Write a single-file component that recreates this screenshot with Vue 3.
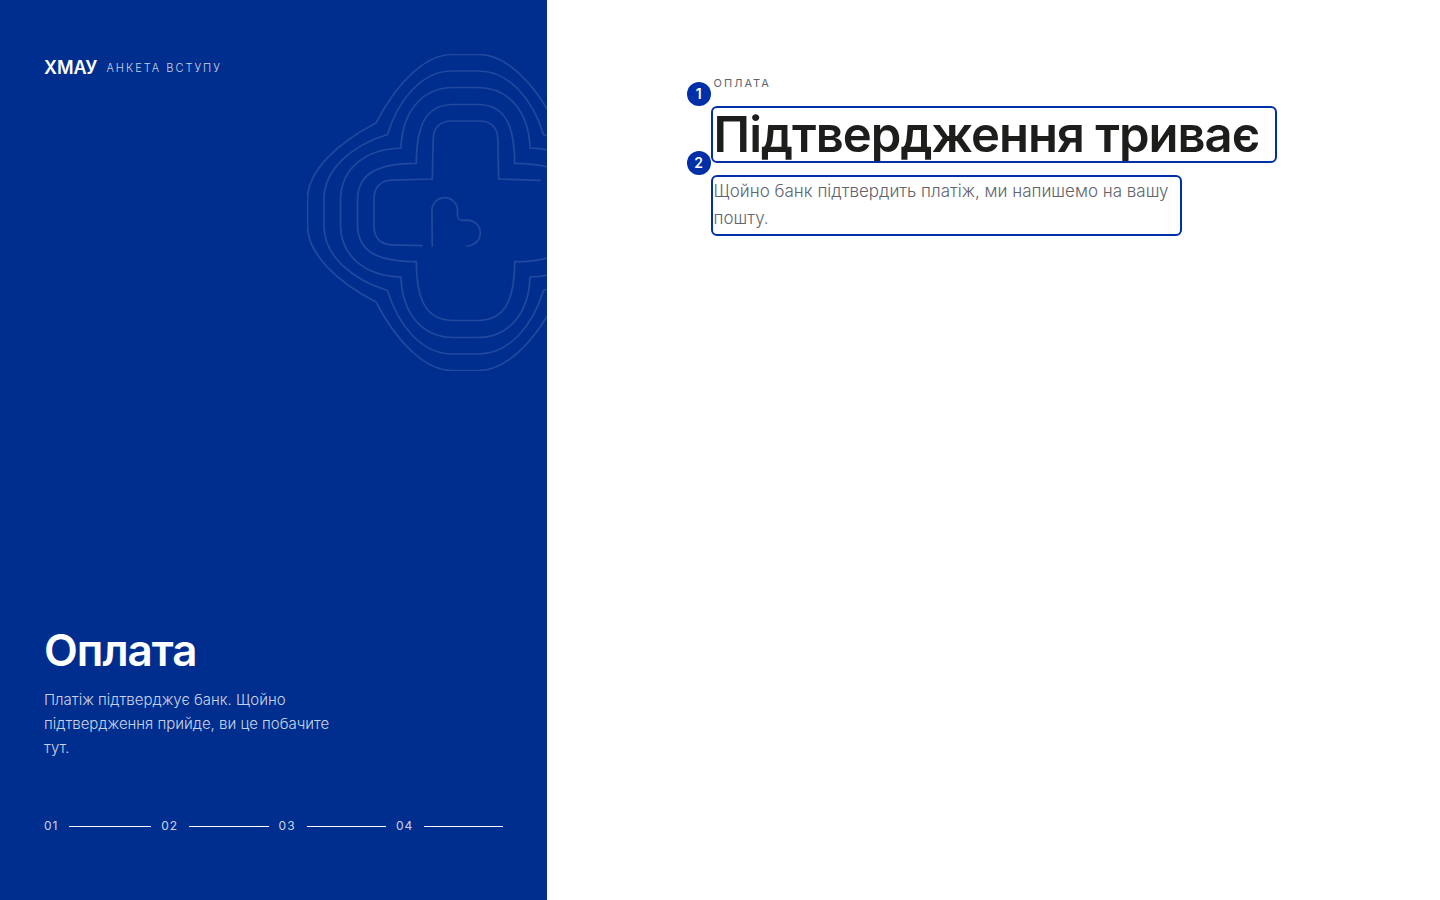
<script setup>
import { ref } from 'vue';

const steps = ref(['01', '02', '03', '04']);

// rings are drawn around the centre of the emblem
const rings = [
  { notch: '89.5', a: [69.5, 128.5], b: [41, 158], end: [13.5, 158] },
  { notch: '78', a: [67, 114], b: [43, 141.5], end: [13.5, 141.5] },
  { notch: '64.5', a: [63.5, 100], b: [44, 125], end: [12, 125] },
  { notch: '49.2', a: [49, 90], b: [38, 108], end: [12, 108] }
];

// one ring: four lobes, mirrored over both axes
const ringPath = ({ notch: n, a, b, end: e }) => [
  `M-${n} -${n}`,
  `C-${a[0]} -${a[1]} -${b[0]} -${b[1]} -${e[0]} -${e[1]}H${e[0]}`,
  `C${b[0]} -${b[1]} ${a[0]} -${a[1]} ${n} -${n}`,
  `C${a[1]} -${a[0]} ${b[1]} -${b[0]} ${e[1]} -${e[0]}V${e[0]}`,
  `C${b[1]} ${b[0]} ${a[1]} ${a[0]} ${n} ${n}`,
  `C${a[0]} ${a[1]} ${b[0]} ${b[1]} ${e[0]} ${e[1]}H-${e[0]}`,
  `C-${b[0]} ${b[1]} -${a[0]} ${a[1]} -${n} ${n}`,
  `C-${a[1]} ${a[0]} -${b[1]} ${b[0]} -${e[1]} ${e[0]}V-${e[0]}`,
  `C-${b[1]} -${b[0]} -${a[1]} -${a[0]} -${n} -${n}Z`
].join('');
</script>

<template>
  <div class="page">
    <aside class="side">
      <svg class="emblem" viewBox="-158.5 -158.5 317 317" aria-hidden="true">
        <path v-for="ring in rings" :key="ring.notch" :d="ringPath(ring)" />
        <path d="M-43.5 33.2L-74 32.3C-85 32-91.5 25-91.5 14V-14C-91.5-25-85-32-74-32.3L-33.2-33.5L-32.3-74C-32-85-25-91.5-14-91.5H14C25-91.5 32-85 32.3-74L33.2-33.5L74.5-32.2" />
        <path d="M-33.2 33.5L-33.6-2C-33.6-9-28-14.8-20.8-14.8C-13.5-14.8-8-9-8-2V2.5C-8 5.5-6 7.8-3 7.8L2 7.6C9 7.6 14.8 13.5 14.8 20.5C14.8 27.5 9 33.5 1.2 33.5" />
      </svg>

      <header class="brand">
        <strong class="brand-name">ХМАУ</strong>
        <span class="brand-sub">Анкета вступу</span>
      </header>

      <div class="side-bottom">
        <h2 class="side-title">Оплата</h2>
        <p class="side-text">Платіж підтверджує банк. Щойно підтвердження прийде, ви це побачите тут.</p>
        <ol class="steps">
          <li v-for="step in steps" :key="step" class="step">
            <span>{{ step }}</span>
            <i class="step-line"></i>
          </li>
        </ol>
      </div>
    </aside>

    <main class="main">
      <section class="content">
        <p class="eyebrow">Оплата</p>
        <div class="marked">
          <span class="badge">1</span>
          <h1 class="title">Підтвердження триває</h1>
        </div>
        <div class="marked marked-text">
          <span class="badge">2</span>
          <p class="lead">Щойно банк підтвердить платіж, ми напишемо на вашу пошту.</p>
        </div>
      </section>
    </main>
  </div>
</template>

<style>
body {
  margin: 0;
  background: #fff;
}
</style>

<style scoped>
.page {
  display: grid;
  grid-template-columns: 38% 1fr;
  min-height: 100vh;
  font-family: Inter, 'Noto Sans', sans-serif;
  color: #1d1d1b;
}

.side {
  position: relative;
  display: flex;
  flex-direction: column;
  justify-content: space-between;
  box-sizing: border-box;
  padding: 57px 44px 66px;
  overflow: hidden;
  background: #002e8f;
  color: #fff;
}

.emblem {
  position: absolute;
  top: 54px;
  right: -77px;
  width: 317px;
  height: 317px;
  fill: none;
  stroke: rgba(255, 255, 255, 0.13);
  stroke-width: 1.7;
  stroke-linecap: round;
}

.brand {
  display: flex;
  align-items: center;
  gap: 9px;
}

.brand-name {
  font-size: 18px;
  line-height: 22px;
  font-weight: 600;
}

.brand-sub {
  font-size: 11px;
  line-height: 16px;
  font-weight: 300;
  letter-spacing: 2px;
  text-transform: uppercase;
  color: rgba(255, 255, 255, 0.8);
}

.side-title {
  margin: 0;
  font-size: 44px;
  line-height: 48px;
  font-weight: 600;
  letter-spacing: -1px;
}

.side-text {
  max-width: 300px;
  margin: 14px 0 0;
  font-size: 15px;
  line-height: 24px;
  font-weight: 300;
  color: rgba(255, 255, 255, 0.8);
}

.steps {
  display: flex;
  gap: 10px;
  margin: 58px 0 0;
  padding: 0;
  list-style: none;
}

.step {
  display: flex;
  flex: 1;
  align-items: center;
  gap: 11px;
  font-size: 12px;
  line-height: 16px;
  letter-spacing: 1px;
  color: rgba(255, 255, 255, 0.8);
}

.step-line {
  flex: 1;
  height: 1px;
  background: #fff;
}

.main {
  padding: 74px 40px;
}

.content {
  max-width: 560px;
  margin: 0 auto;
}

.eyebrow {
  margin: 0 0 17px;
  font-size: 11px;
  line-height: 18px;
  font-weight: 400;
  letter-spacing: 2px;
  text-transform: uppercase;
  color: #60646c;
}

.marked {
  position: relative;
  border-radius: 3px;
  outline: 2px solid #002fa7;
  outline-offset: 1px;
}

.marked-text {
  max-width: 465px;
  margin-top: 18px;
  padding-bottom: 1px;
}

.badge {
  position: absolute;
  top: -27px;
  left: -27px;
  width: 24px;
  height: 24px;
  border-radius: 50%;
  background: #002fa7;
  color: #fff;
  font-size: 14px;
  line-height: 24px;
  font-weight: 600;
  text-align: center;
}

.title {
  margin: 0;
  font-size: 49px;
  line-height: 51px;
  font-weight: 600;
  letter-spacing: -1px;
}

.lead {
  margin: 0;
  font-size: 17px;
  line-height: 27px;
  font-weight: 300;
  color: #60646c;
}
</style>
